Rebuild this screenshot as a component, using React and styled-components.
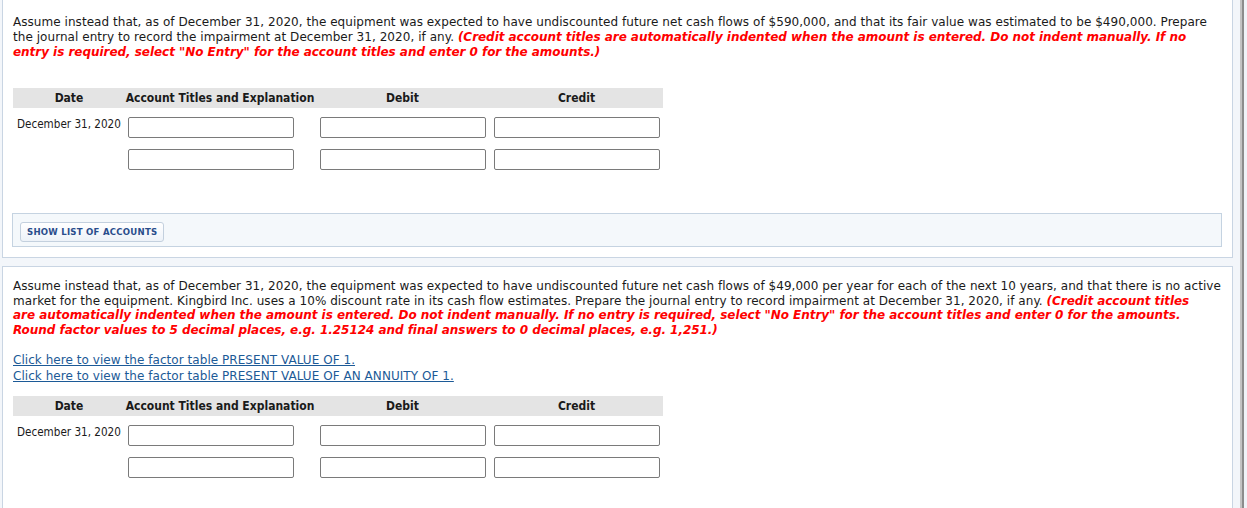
import React from 'react';
import styled, { createGlobalStyle } from 'styled-components';

const GlobalStyle = createGlobalStyle`
  html, body {
    margin: 0;
    padding: 0;
    background: #ffffff;
  }
  body {
    font-family: "DejaVu Sans", Verdana, sans-serif;
    color: #1a1a1a;
  }
`;

const Frame = styled.div`
  display: flex;
  height: 508px;
  overflow: hidden;
`;

const Main = styled.div`
  width: 1240px;
  box-sizing: border-box;
  padding: 0 7px 0 2px;
  background: #f3f6fa;
`;

const ScrollEdge = styled.div`
  width: 4px;
  background: linear-gradient(to right, #c3c3c3 50%, #8c8c8c 50%);
`;

const Outside = styled.div`
  flex: 1;
  background: #f0f3f8;
`;

const Panel = styled.section`
  background: #ffffff;
  border: 1px solid #c9d5e3;
  border-top: ${(p) => (p.$cut ? 'none' : '1px solid #c9d5e3')};
  padding: ${(p) => p.$top}px 10px 10px 10px;
  margin-bottom: 8px;
  min-height: ${(p) => (p.$fill ? '300px' : 'auto')};
`;

const Prose = styled.p`
  margin: 0;
  font-size: 12px;
  letter-spacing: 0.05px;
  line-height: ${(p) => p.$lh}px;
`;

const Note = styled.em`
  color: #ff0000;
  font-weight: bold;
  font-style: italic;
  letter-spacing: -0.04px;
`;

const Links = styled.div`
  margin-top: 16px;
  display: flex;
  flex-direction: column;
`;

const FactorLink = styled.a`
  font-size: 12px;
  letter-spacing: 0.05px;
  line-height: 15.5px;
  color: #1c5a97;
  text-decoration: underline;
  cursor: pointer;
  align-self: flex-start;
`;

const Journal = styled.div`
  margin-top: ${(p) => p.$gap}px;
  width: 650px;
  display: grid;
  grid-template-columns: 112px 190px 175px 173px;
  row-gap: 11px;
  font-family: "DejaVu Sans Condensed", "DejaVu Sans", Verdana, sans-serif;
  font-stretch: semi-condensed;
`;

const HeadCell = styled.div`
  height: 20px;
  background: #e4e4e4;
  font-size: 12px;
  font-weight: bold;
  line-height: 20px;
  text-align: center;
  margin-bottom: -2px;
`;

const DateCell = styled.div`
  font-size: 11.6px;
  line-height: 15px;
  padding: 0 0 0 4px;
  white-space: nowrap;
  grid-column: 1;
`;

const EntryInput = styled.input`
  box-sizing: border-box;
  width: 166px;
  height: 21px;
  border: 1px solid #7a7a7a;
  border-radius: 2px;
  background: #ffffff;
  justify-self: ${(p) => p.$align || 'center'};
  margin-left: ${(p) => p.$shift || 0}px;
  grid-column: ${(p) => p.$col};
`;

const AccountsBar = styled.div`
  margin: ${(p) => p.$gap}px 0 0 -1px;
  border: 1px solid #c5d3e1;
  background: #f4f8fb;
  padding: 6px 7px;
  height: 20px;
`;

const ListButton = styled.button`
  height: 20px;
  padding: 0 6px;
  border: 1px solid #c3d0de;
  border-radius: 3px;
  background: linear-gradient(#ffffff, #edf2f8);
  color: #294d8c;
  font-family: "DejaVu Sans Condensed", "DejaVu Sans", Verdana, sans-serif;
  font-stretch: semi-condensed;
  font-size: 9.5px;
  font-weight: bold;
  letter-spacing: 0.25px;
  cursor: pointer;
`;

function JournalTable({ gap }) {
  return (
    <Journal $gap={gap}>
      <HeadCell>Date</HeadCell>
      <HeadCell>Account Titles and Explanation</HeadCell>
      <HeadCell>Debit</HeadCell>
      <HeadCell>Credit</HeadCell>
      <DateCell>December 31, 2020</DateCell>
      <EntryInput $col={2} $align="start" $shift={3} />
      <EntryInput $col={3} />
      <EntryInput $col={4} />
      <DateCell />
      <EntryInput $col={2} $align="start" $shift={3} />
      <EntryInput $col={3} />
      <EntryInput $col={4} />
    </Journal>
  );
}

export default function App() {
  return (
    <Frame>
      <GlobalStyle />
      <Main>
        <Panel $cut $top={15}>
          <Prose $lh={15}>
            Assume instead that, as of December 31, 2020, the equipment was expected to have
            undiscounted future net cash flows of $590,000, and that its fair value was estimated
            to be $490,000. Prepare the journal entry to record the impairment at December 31,
            2020, if any.{' '}
            <Note>
              (Credit account titles are automatically indented when the amount is entered. Do
              not indent manually. If no entry is required, select "No Entry" for the account
              titles and enter 0 for the amounts.)
            </Note>
          </Prose>
          <JournalTable gap={28} />
          <AccountsBar $gap={43}>
            <ListButton>SHOW LIST OF ACCOUNTS</ListButton>
          </AccountsBar>
        </Panel>
        <Panel $top={12} $fill>
          <Prose $lh={14.6}>
            Assume instead that, as of December 31, 2020, the equipment was expected to have
            undiscounted future net cash flows of $49,000 per year for each of the next 10 years,
            and that there is no active market for the equipment. Kingbird Inc. uses a 10%
            discount rate in its cash flow estimates. Prepare the journal entry to record
            impairment at December 31, 2020, if any.{' '}
            <Note>
              (Credit account titles
              <br />
              are automatically indented when the amount is entered. Do not indent manually. If
              no entry is required, select "No Entry" for the account titles and enter 0 for the
              amounts. Round factor values to 5 decimal places, e.g. 1.25124 and final answers
              to 0 decimal places, e.g. 1,251.)
            </Note>
          </Prose>
          <Links>
            <FactorLink>Click here to view the factor table PRESENT VALUE OF 1.</FactorLink>
            <FactorLink>
              Click here to view the factor table PRESENT VALUE OF AN ANNUITY OF 1.
            </FactorLink>
          </Links>
          <JournalTable gap={12} />
        </Panel>
      </Main>
      <ScrollEdge />
      <Outside />
    </Frame>
  );
}
